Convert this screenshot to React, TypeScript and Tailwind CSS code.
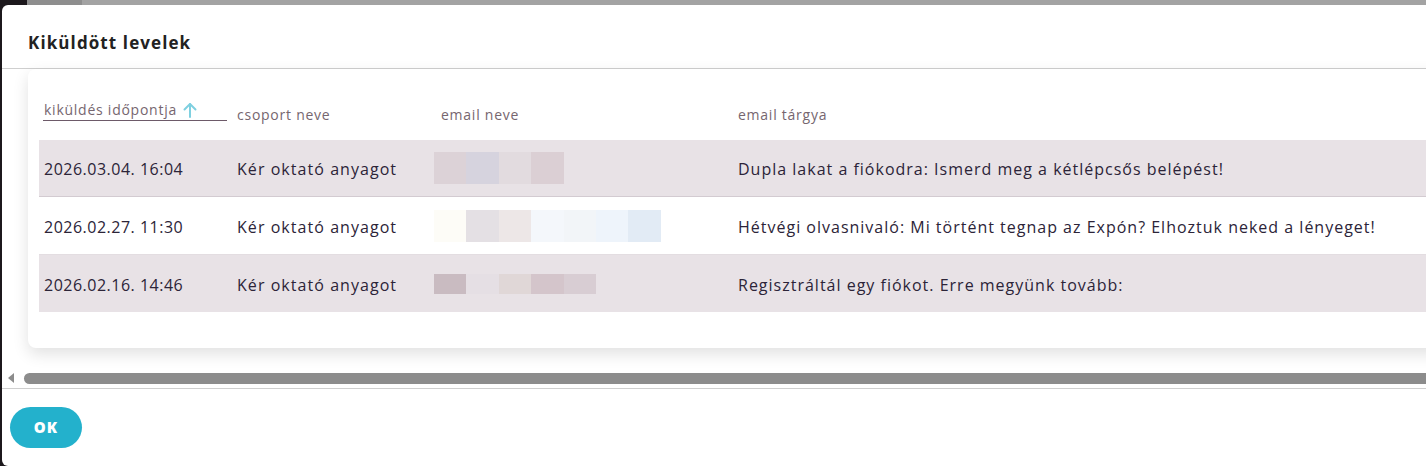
import React from "react";

const rows = [
  {
    date: "2026.03.04. 16:04",
    group: "Kér oktató anyagot",
    subject: "Dupla lakat a fiókodra: Ismerd meg a kétlépcsős belépést!",
    blocks: ["#dcd2d7", "#d6d3de", "#e2dbdf", "#dbcfd4"],
    blockH: "h-[32px]",
    shaded: true,
  },
  {
    date: "2026.02.27. 11:30",
    group: "Kér oktató anyagot",
    subject: "Hétvégi olvasnivaló: Mi történt tegnap az Expón? Elhoztuk neked a lényeget!",
    blocks: ["#fdfcf7", "#e4e0e4", "#ede7e7", "#f4f7fb", "#f2f5f8", "#eef4fb", "#e2ebf5"],
    blockH: "h-[32px]",
    shaded: false,
  },
  {
    date: "2026.02.16. 14:46",
    group: "Kér oktató anyagot",
    subject: "Regisztráltál egy fiókot. Erre megyünk tovább:",
    blocks: ["#c9bbc1", "#e5dfe4", "#e0d7d7", "#d4c5cb", "#d8cdd3"],
    blockH: "h-[20px]",
    shaded: true,
  },
];

export default function App() {
  return (
    <div
      className="relative w-[1426px] h-[466px] overflow-hidden bg-[#1c181c]"
      style={{ fontFamily: '"Open Sans", "Noto Sans", sans-serif' }}
    >
      {/* backdrop top strip */}
      <div className="absolute left-[27px] top-0 h-[5px] w-[55px] bg-[#8e8e8e]" />
      <div className="absolute left-[82px] top-0 h-[5px] right-0 bg-[#a3a3a3]" />

      {/* modal */}
      <div className="absolute left-[2px] top-[5px] w-[1440px] h-[461px] bg-white rounded-tl-[6px] rounded-bl-[6px] flex flex-col">
        <div className="h-[64px] shrink-0 border-b border-[#cfcfcf] flex items-center pl-[26px] pt-[13px]">
          <h2 className="text-[17px] font-bold text-[#222222] tracking-[1.1px]">Kiküldött levelek</h2>
        </div>

        <div className="h-[300px] shrink-0 pl-[26px]">
          <div className="h-[279px] bg-white rounded-[8px] shadow-[0_6px_16px_rgba(0,0,0,0.12)] pt-[20px] pl-[11px]">
            {/* header */}
            <div className="flex h-[51px] text-[14px] text-[#76666f] tracking-[0.75px]">
              <div className="w-[193px] pl-[4px]">
                <div className="w-[184px] h-[32px] border-b border-[#6d5a69] flex items-center gap-[6px] pl-[1px] pt-[10px]">
                  <span>kiküldés időpontja</span>
                  <svg width="14" height="16" viewBox="0 0 14 16" fill="none" stroke="#7fd0e0" strokeWidth="2" strokeLinecap="round" strokeLinejoin="round">
                    <path d="M7 15V2" />
                    <path d="M1.5 7.5L7 2l5.5 5.5" />
                  </svg>
                </div>
              </div>
              <div className="w-[203px] pl-[5px] pt-[10px] leading-[32px]">csoport neve</div>
              <div className="w-[298px] pl-[6px] pt-[10px] leading-[32px]">email neve</div>
              <div className="flex-1 pl-[5px] pt-[10px] leading-[32px]">email tárgya</div>
            </div>

            {rows.map((r, i) => (
              <div
                key={i}
                className={`flex items-center text-[16px] text-[#2c2438] tracking-[1px] ${
                  r.shaded ? "bg-[#e8e2e6]" : "bg-white"
                } ${i === 0 ? "h-[57px] border-b border-[#d3cbd1]" : i === 1 ? "h-[58px] border-b border-[#e3dde1]" : "h-[57px]"}`}
              >
                <div className="w-[193px] pl-[5px] pt-[2px] tracking-[0.5px]">{r.date}</div>
                <div className="w-[202px] pl-[5px] pt-[2px] tracking-[1.05px]">{r.group}</div>
                <div className="w-[299px] flex">
                  {r.blocks.map((c, j) => (
                    <div key={j} className={`w-[32.4px] ${r.blockH}`} style={{ backgroundColor: c }} />
                  ))}
                </div>
                <div className="flex-1 pl-[5px] pt-[2px] whitespace-nowrap">{r.subject}</div>
              </div>
            ))}
          </div>
        </div>

        {/* scrollbar */}
        <div className="h-[20px] shrink-0 flex items-center border-b border-[#cfcfcf] pb-[1px]">
          <svg width="8" height="10" viewBox="0 0 8 10" className="ml-[5px]">
            <path d="M7 0V10L1 5Z" fill="#8c8c8c" />
          </svg>
          <div className="ml-[9px] flex-1 h-[11px] rounded-full bg-[#8c8c8c]" />
        </div>

        <div className="flex-1 pl-[8px] pt-[18px]">
          <button className="w-[72px] h-[41px] rounded-full bg-[#23b1cc] text-white font-extrabold text-[15px] tracking-[1px]">
            OK
          </button>
        </div>
      </div>
    </div>
  );
}
